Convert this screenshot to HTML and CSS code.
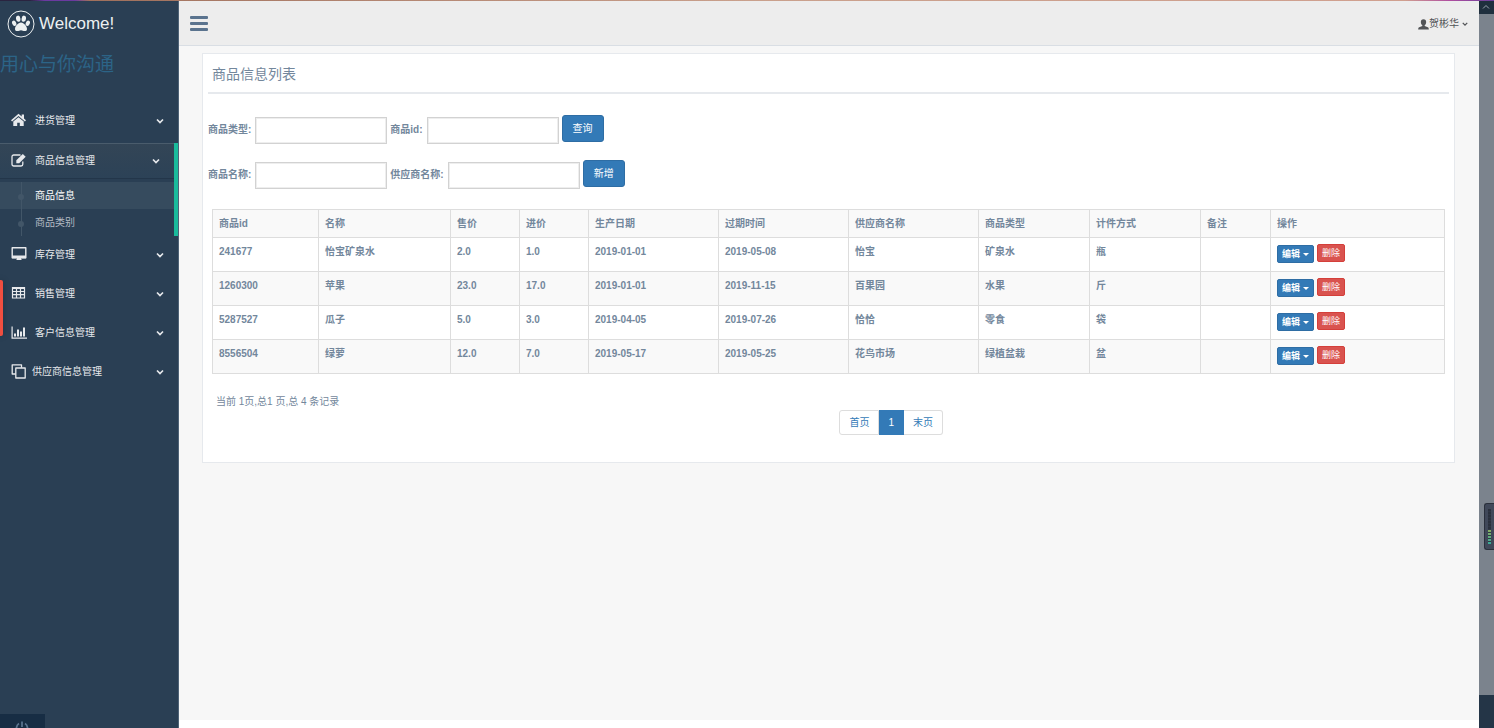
FILE: index.html
```html
<!DOCTYPE html>
<html lang="zh-CN">
<head>
<meta charset="utf-8">
<title>商品信息列表</title>
<link rel="stylesheet" href="styles.css">
</head>
<body>
<svg class="sprite" aria-hidden="true">
  <symbol id="chevron" viewBox="0 0 8 8"><path d="M1 2.5 4 5.5 7 2.5" fill="none" stroke="currentColor" stroke-width="1.7"/></symbol>
</svg>
<div class="accent"></div>
<div class="page">
  <aside class="sidebar">
    <a class="brand" href="#">
      <svg class="brand-icon" viewBox="0 0 28 28" fill="currentColor"><circle cx="14" cy="14" r="13" fill="none" stroke="currentColor" stroke-width="1"/><ellipse cx="11.2" cy="8.700" rx="2.2" ry="3.1" transform="rotate(-8 11.2 8.7)"/><ellipse cx="16.8" cy="8.700" rx="2.2" ry="3.1" transform="rotate(8 16.8 8.7)"/><ellipse cx="7.2" cy="13.2" rx="2" ry="2.8" transform="rotate(-24 7.2 13.2)"/><ellipse cx="20.8" cy="13.2" rx="2" ry="2.8" transform="rotate(24 20.8 13.2)"/><path d="M14 12.600c-2.900 0-6 4-6 6.300 0 1.500 1 2.200 2.300 2.200 1.500 0 2.300-.9 3.700-.9s2.200.9 3.700.9c1.300 0 2.300-.7 2.300-2.200 0-2.300-3.100-6.300-6-6.300z"/></svg>
      <span>Welcome!</span>
    </a>
    <p class="slogan">用心与你沟通</p>
    <nav>
      <ul class="menu">
        <li>
          <a class="menu-link" href="#"><svg class="menu-icon" viewBox="0 0 16 16" fill="currentColor"><path d="M7.500.8 0 7.300l1.100 1.300 6.400-5.500 6.400 5.500L15 7.300l-2-1.800V1.600h-2.300v2z"/><path d="M7.500 4.200 2.300 8.600V13h3.900V9.700h2.600V13h3.900V8.600z"/></svg><span>进货管理</span><svg class="chevron"><use href="#chevron"/></svg></a>
        </li>
        <li class="active">
          <a class="menu-link" href="#"><svg class="menu-icon" viewBox="0 0 16 16"><path d="M11.800 8.500v2.800a1.700 1.700 0 0 1-1.700 1.700H2.700A1.700 1.700 0 0 1 1 11.300V3.700A1.700 1.700 0 0 1 2.700 2H9.500" fill="none" stroke="currentColor" stroke-width="1.3"/><path d="M5.300 7.300 11.800.9l2.900 2.900-6.500 6.400H5.300z" fill="currentColor"/></svg><span>商品信息管理</span><svg class="chevron"><use href="#chevron"/></svg></a>
          <ul class="submenu">
            <li class="current"><a href="#">商品信息</a></li>
            <li><a href="#">商品类别</a></li>
          </ul>
        </li>
        <li>
          <a class="menu-link" href="#"><svg class="menu-icon" viewBox="0 0 16 16"><path d="M1.200.7h13.600v10H1.200z" fill="none" stroke="currentColor" stroke-width="1.4" stroke-linejoin="round"/><path d="M1 8.500h14v2.700H1zM6 11h4v1l1 1H5l1-1z" fill="currentColor"/></svg><span>库存管理</span><svg class="chevron"><use href="#chevron"/></svg></a>
        </li>
        <li>
          <a class="menu-link" href="#"><svg class="menu-icon" viewBox="0 0 16 16" fill="none" stroke="currentColor" stroke-width="1.2"><path d="M1.500 1.500h12v10.500h-12zM1.500 5.500h12M1.500 8.700h12M5.500 2v10M9.500 2v10"/><path d="M1 2h13" stroke-width="2"/></svg><span>销售管理</span><svg class="chevron"><use href="#chevron"/></svg></a>
        </li>
        <li>
          <a class="menu-link" href="#"><svg class="menu-icon" viewBox="0 0 16 16" fill="currentColor"><path d="M.5 1.500h1.200v11H16v1.200H.5zM3 8.500h2v3H3zM6 4.500h2v7H6zM9 6.500h2v5H9zM12 2.500h2v9h-2z"/></svg><span>客户信息管理</span><svg class="chevron"><use href="#chevron"/></svg></a>
        </li>
        <li class="tight">
          <a class="menu-link" href="#"><svg class="menu-icon" viewBox="0 0 16 16" fill="none" stroke="currentColor" stroke-width="1.3" stroke-linejoin="round"><path d="M4.600 10H1.200V.8h9.300v3"/><path d="M4.800 4h9.400v10H4.800z"/></svg><span>供应商信息管理</span><svg class="chevron"><use href="#chevron"/></svg></a>
        </li>
      </ul>
    </nav>
    <button class="power" type="button" aria-label="退出"><svg viewBox="0 0 14 14" fill="none" stroke="currentColor" stroke-width="1.8"><path d="M4 2.500a5.500 5.500 0 1 0 6 0M7 .5v5.500"/></svg></button>
    <div class="side-tab"></div>
  </aside>

  <main class="main">
    <header class="topbar">
      <button class="toggle" type="button" aria-label="菜单"><span></span><span></span><span></span></button>
      <button class="user" type="button"><svg class="user-icon" viewBox="0 0 12 12" fill="currentColor"><path d="M6 .3C4 .3 3 1.600 3.100 3.500c.1 1.600.8 2.800 1.600 3.400v.8L1.300 9.100C.4 9.500.2 10.500.2 11.500h11.600c0-1-.2-2-1.100-2.400L7.300 7.700v-.8c.8-.6 1.500-1.800 1.600-3.400C9 1.600 8 .3 6 .3z"/></svg><span>贺彬华</span><svg class="caret-thin"><use href="#chevron"/></svg></button>
    </header>
    <div class="content">
      <section class="panel">
        <h2 class="panel-title">商品信息列表</h2>
        <form class="filters">
          <div class="filter-row">
            <label for="type">商品类型:</label><input id="type" type="text">
            <label for="pid">商品id:</label><input id="pid" type="text">
            <button class="btn" type="button">查询</button>
          </div>
          <div class="filter-row">
            <label for="name">商品名称:</label><input id="name" type="text">
            <label for="supplier">供应商名称:</label><input id="supplier" type="text">
            <button class="btn" type="button">新增</button>
          </div>
        </form>
        <table class="goods">
          <colgroup><col class="w-id"><col class="w-name"><col class="w-price"><col class="w-price"><col class="w-date"><col class="w-date"><col class="w-date"><col class="w-type"><col class="w-type"><col class="w-note"><col class="w-action"></colgroup>
          <thead>
            <tr><th>商品id</th><th>名称</th><th>售价</th><th>进价</th><th>生产日期</th><th>过期时间</th><th>供应商名称</th><th>商品类型</th><th>计件方式</th><th>备注</th><th>操作</th></tr>
          </thead>
          <tbody>
            <tr><td>241677</td><td>怡宝矿泉水</td><td>2.0</td><td>1.0</td><td>2019-01-01</td><td>2019-05-08</td><td>怡宝</td><td>矿泉水</td><td>瓶</td><td></td><td class="action-cell"><div class="actions"><button class="btn-xs edit" type="button">编辑<i class="caret"></i></button><button class="btn-xs delete" type="button">删除</button></div></td></tr>
            <tr><td>1260300</td><td>苹果</td><td>23.0</td><td>17.0</td><td>2019-01-01</td><td>2019-11-15</td><td>百果园</td><td>水果</td><td>斤</td><td></td><td class="action-cell"><div class="actions"><button class="btn-xs edit" type="button">编辑<i class="caret"></i></button><button class="btn-xs delete" type="button">删除</button></div></td></tr>
            <tr><td>5287527</td><td>瓜子</td><td>5.0</td><td>3.0</td><td>2019-04-05</td><td>2019-07-26</td><td>恰恰</td><td>零食</td><td>袋</td><td></td><td class="action-cell"><div class="actions"><button class="btn-xs edit" type="button">编辑<i class="caret"></i></button><button class="btn-xs delete" type="button">删除</button></div></td></tr>
            <tr><td>8556504</td><td>绿萝</td><td>12.0</td><td>7.0</td><td>2019-05-17</td><td>2019-05-25</td><td>花鸟市场</td><td>绿植盆栽</td><td>盆</td><td></td><td class="action-cell"><div class="actions"><button class="btn-xs edit" type="button">编辑<i class="caret"></i></button><button class="btn-xs delete" type="button">删除</button></div></td></tr>
          </tbody>
        </table>
        <div class="table-footer">
          <p class="summary">当前 1页,总1 页,总 4 条记录</p>
          <ul class="pagination">
            <li><a href="#">首页</a></li>
            <li><a class="on" href="#">1</a></li>
            <li><a href="#">末页</a></li>
          </ul>
        </div>
      </section>
    </div>
  </main>

  <div class="rail">
    <div class="rail-up"><svg viewBox="0 0 8 8"><path d="M1 5.500 4 2.500 7 5.500" fill="none" stroke="currentColor"/></svg></div>
    <div class="rail-down"></div>
    <div class="meter"><span></span></div>
  </div>
</div>
</body>
</html>
```

FILE: styles.css
```css
* { box-sizing: border-box; }
body {
  margin: 0;
  min-height: 100vh;
  display: flex;
  flex-direction: column;
  background: #fff;
  color: #73879c;
  font: 10px/14px "Liberation Sans", "Noto Sans CJK SC", sans-serif;
}
button, input { font: inherit; color: inherit; }
button { padding: 0; border: 0; background: none; cursor: pointer; }
a { color: inherit; text-decoration: none; }
ul { margin: 0; padding: 0; list-style: none; }
p, h2 { margin: 0; }
svg { display: block; }
.sprite { position: absolute; width: 0; height: 0; }

.accent {
  height: 1px;
  background: linear-gradient(90deg, #2a2440 0 2%, #6b3aa0 3% 5%, #a0705c 6%, #c9a08c 50%, #d0a08f 94%, #b04fa0 97%, #6a3f9c);
}
.page { flex: 1; display: flex; }

/* sidebar */
.sidebar {
  position: relative;
  flex: 0 0 179px;
  display: flex;
  flex-direction: column;
  background: #2a3f54;
  border-right: 1px solid #4f6377;
  color: #e7e9ec;
}
.brand {
  display: flex;
  align-items: center;
  gap: 4px;
  height: 45px;
  padding-left: 7px;
  font-size: 17px;
  line-height: 20px;
  color: #ecf0f1;
}
.brand-icon { width: 28px; height: 28px; }
.slogan { height: 58px; padding-top: 5px; font-size: 19px; line-height: 28px; color: #2c6487; }
.menu > li { margin-bottom: 5px; }
.menu-link {
  display: flex;
  align-items: center;
  gap: 8px;
  height: 34px;
  padding: 0 14px 0 11px;
}
.tight .menu-link { gap: 5px; }
.menu-icon { width: 16px; height: 16px; }
.chevron { width: 8px; height: 8px; margin-left: auto; }
.menu > .active { margin-bottom: 2px; border-right: 4px solid #1abb9c; }
.active .menu-link {
  height: 36px;
  border-top: 1px solid #4a5c6c;
  border-bottom: 1px solid #23364a;
  background: linear-gradient(#334556, #2c4257);
}
.submenu { padding-top: 3px; }
.submenu a {
  position: relative;
  display: block;
  padding: 7px 0 6px 35px;
  color: #b4bcc4;
}
.submenu .current { background: #364b5e; }
.submenu .current a { color: #fff; }
.submenu a::before {
  content: "";
  position: absolute;
  left: 21px;
  top: 0;
  bottom: 0;
  width: 1px;
  background: #425668;
}
.submenu a::after {
  content: "";
  position: absolute;
  left: 18px;
  top: 12px;
  width: 6px;
  height: 6px;
  border-radius: 50%;
  background: #425668;
}
.power {
  width: 45px;
  height: 14px;
  margin-top: auto;
  padding: 7px 0 0 15px;
  overflow: hidden;
  background: #172d44;
  color: #5a738e;
}
.power svg { width: 14px; height: 14px; }
.side-tab {
  position: absolute;
  left: 0;
  top: 279px;
  width: 3px;
  height: 56px;
  border-radius: 0 2px 2px 0;
  background: #f04e40;
  box-shadow: 0 0 6px rgba(0, 0, 0, .3);
}

/* main column */
.main { flex: 1; min-width: 0; display: flex; flex-direction: column; padding-bottom: 8px; }
.topbar {
  display: flex;
  align-items: center;
  justify-content: space-between;
  height: 45px;
  padding: 0 11px;
  border-bottom: 1px solid #d9dee4;
  background: #ededed;
}
.toggle { display: grid; gap: 3px; width: 18px; }
.toggle span { height: 3px; border-radius: 1px; background: #5a738e; }
.user { display: flex; align-items: center; padding-top: 2px; color: #515356; }
.user-icon { width: 11px; height: 11px; }
.caret-thin { width: 6px; height: 6px; margin-left: 3px; }
.content { flex: 1; padding: 7px 24px 8px 23px; background: #f7f7f7; }

.panel { padding: 5px; border: 1px solid #e6e9ed; background: #fff; }
.panel-title {
  padding: 5px 4px 8px;
  border-bottom: 2px solid #e6e9ed;
  font-size: 14px;
  line-height: 20px;
  font-weight: 400;
}
.filters { display: grid; gap: 16px; padding: 21px 0 20px; font-weight: 700; }
.filter-row { display: flex; flex-wrap: wrap; align-items: center; gap: 3px; min-height: 29px; }
.filter-row label { padding-right: 1px; }
.filter-row input {
  align-self: flex-end;
  width: 132px;
  height: 27px;
  padding: 4px;
  border: 1px solid #d2d2d2;
  background: #fff;
  box-shadow: inset 0 0 0 1px #eee;
}
.btn {
  align-self: flex-start;
  width: 42px;
  height: 27px;
  border: 1px solid #2e6da4;
  border-radius: 3px;
  background: #337ab7;
  color: #fff;
  font-weight: 400;
}

.goods {
  width: calc(100% - 8px);
  margin: 0 4px;
  table-layout: fixed;
  border-collapse: collapse;
  font-weight: 700;
}
.w-id { width: 106px; }
.w-name { width: 132px; }
.w-price { width: 69px; }
.w-date { width: 130px; }
.w-type { width: 111px; }
.w-note { width: 70px; }
.w-action { width: auto; }
.goods th, .goods td {
  padding: 7px 6px 6px;
  border: 1px solid #ddd;
  text-align: left;
  vertical-align: top;
}
.goods th, .goods tbody tr:nth-child(even) { background: #f9f9f9; }
.goods .action-cell { padding: 6px 6px 8px; }
.actions { display: flex; align-items: flex-start; gap: 3px; height: 19px; }
.btn-xs {
  height: 18px;
  padding: 0 4px;
  border: 1px solid #2e6da4;
  border-radius: 2px;
  color: #fff;
  font-size: 9px;
  line-height: 14px;
}
.edit { display: flex; align-items: center; gap: 3px; align-self: flex-end; background: #337ab7; }
.delete { border-color: #d43f3a; background: #d9534f; font-weight: 400; }
.caret { border: 3px solid transparent; border-top-color: #fff; border-bottom: 0; }

.table-footer {
  display: grid;
  grid-template-columns: 5fr auto 4fr;
  padding: 21px 4px 22px;
}
.summary { padding-left: 4px; white-space: nowrap; }
.pagination { display: flex; margin-top: 15px; color: #337ab7; }
.pagination a {
  display: block;
  padding: 5px 9px 4px;
  border: 1px solid #ddd;
  border-left-width: 0;
  background: #fff;
}
.pagination li:first-child a { border-left-width: 1px; border-radius: 3px 0 0 3px; }
.pagination li:last-child a { border-radius: 0 3px 3px 0; }
.pagination .on { border-color: #337ab7; background: #337ab7; color: #fff; }

/* scroll rail */
.rail {
  position: relative;
  flex: 0 0 15px;
  display: flex;
  flex-direction: column;
  justify-content: space-between;
  background: #7b838d;
}
.rail-up { height: 13px; padding: 2px 3px; background: #1f2f3e; color: #9aa5b0; }
.rail-up svg { width: 8px; height: 8px; }
.rail-down { height: 33px; background: #243547; }
.meter {
  position: absolute;
  right: 0;
  top: 502px;
  width: 10px;
  height: 47px;
  padding: 5px 3px;
  border: 1px solid #2a303c;
  border-right: 0;
  border-radius: 3px 0 0 3px;
  background: #404859;
}
.meter span {
  display: block;
  height: 35px;
  background:
    repeating-linear-gradient(transparent 0 2px, #303745 2px 3px),
    linear-gradient(#2b313d 0 20px, #8fae5a 20px, #35a89a);
}
```
